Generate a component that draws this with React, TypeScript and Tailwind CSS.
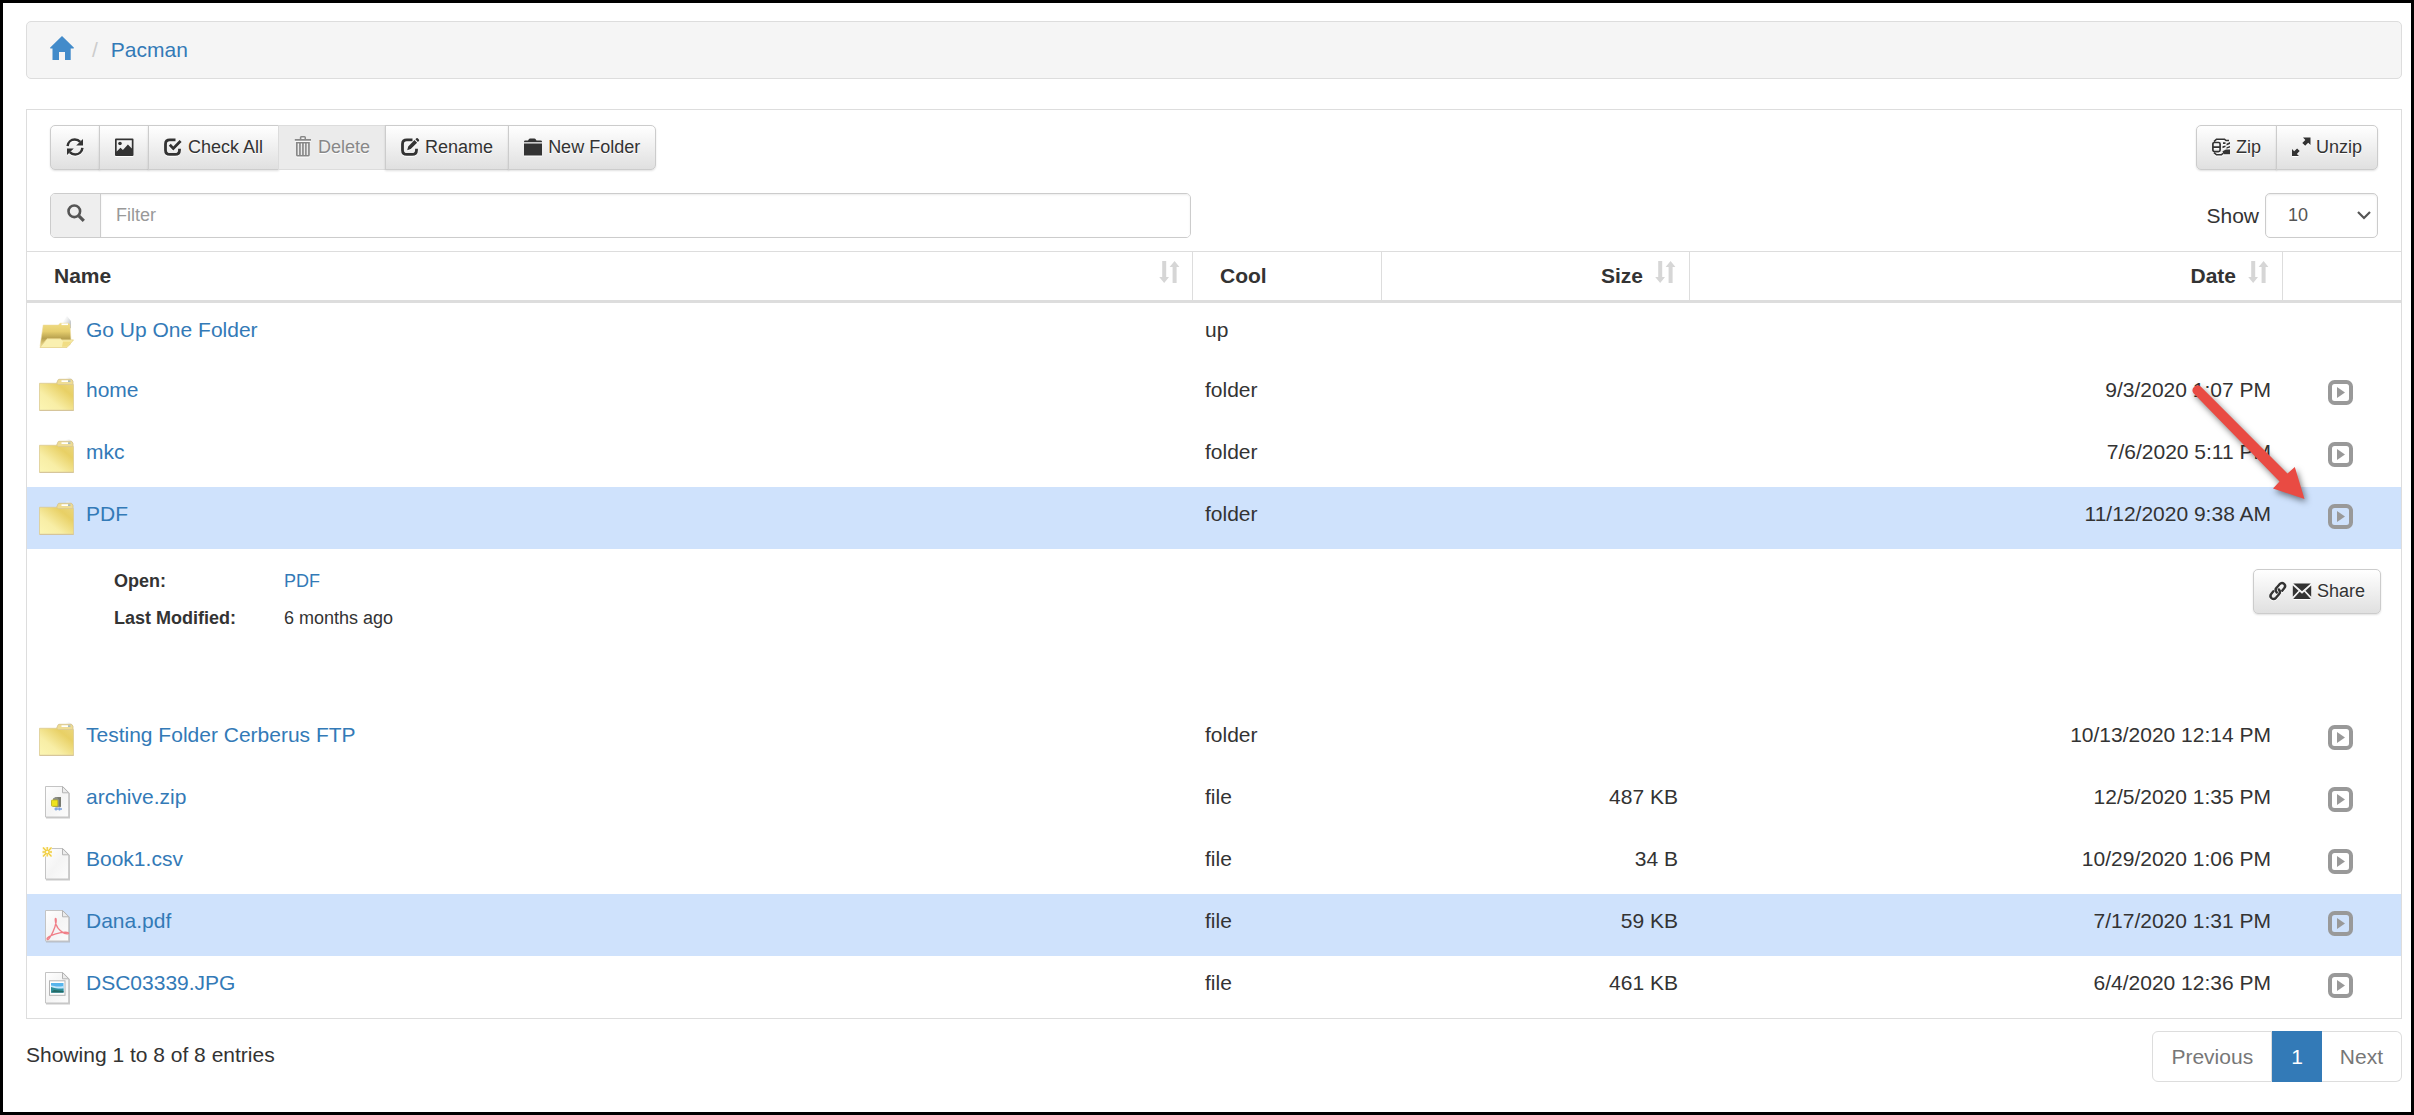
import { useState } from "react";
import type { ReactNode } from "react";

type EntryKind = "up" | "folder" | "zip" | "csv" | "pdf" | "image";

interface Entry {
  name: string;
  kind: EntryKind;
  cool: string;
  size?: string;
  date?: string;
  selected?: boolean;
  modified?: string;
}

const ENTRIES: Entry[] = [
  { name: "Go Up One Folder", kind: "up", cool: "up" },
  { name: "home", kind: "folder", cool: "folder", date: "9/3/2020 1:07 PM" },
  { name: "mkc", kind: "folder", cool: "folder", date: "7/6/2020 5:11 PM" },
  {
    name: "PDF",
    kind: "folder",
    cool: "folder",
    date: "11/12/2020 9:38 AM",
    selected: true,
    modified: "6 months ago",
  },
  { name: "Testing Folder Cerberus FTP", kind: "folder", cool: "folder", date: "10/13/2020 12:14 PM" },
  { name: "archive.zip", kind: "zip", cool: "file", size: "487 KB", date: "12/5/2020 1:35 PM" },
  { name: "Book1.csv", kind: "csv", cool: "file", size: "34 B", date: "10/29/2020 1:06 PM" },
  { name: "Dana.pdf", kind: "pdf", cool: "file", size: "59 KB", date: "7/17/2020 1:31 PM", selected: true },
  { name: "DSC03339.JPG", kind: "image", cool: "file", size: "461 KB", date: "6/4/2020 12:36 PM" },
];

/* ---------- glyphs ---------- */

function Glyph({ children }: { children: ReactNode }) {
  return (
    <svg
      viewBox="0 0 18 18"
      className="mb-0.5 h-[18px] w-[18px] shrink-0 overflow-visible drop-shadow-[0_1px_0_#fff]"
      fill="currentColor"
      aria-hidden="true"
    >
      {children}
    </svg>
  );
}

const RefreshGlyph = () => (
  <Glyph>
    <path d="M1.6 8.2C2 4 5 1.6 8.8 1.6c2.3 0 4 .8 5.4 2.3" fill="none" stroke="currentColor" strokeWidth="2.5" />
    <path d="M17 1v6.6h-6.8z" />
    <path d="M16.4 9.8c-.4 4.2-3.4 6.6-7.2 6.6-2.3 0-4-.8-5.4-2.3" fill="none" stroke="currentColor" strokeWidth="2.5" />
    <path d="M1 17v-6.6h6.8z" />
  </Glyph>
);

const PictureGlyph = () => (
  <Glyph>
    <path
      fillRule="evenodd"
      d="M1 .5h16.500q1 0 1 1v15.500q0 1-1 1H1q-1 0-1-1V1.500q0-1 1-1zM1.700 2.200V13.500L5.500 9.800l2.400 2.200 5-5.500 3.900 4V2.200z"
    />
    <circle cx="5" cy="5.500" r="1.800" />
  </Glyph>
);

const boxOutline = "M11.500 1.800H5.800C3 1.800 1.500 3.200 1.500 6v6.200c0 2.800 1.500 4.200 4.300 4.200h5.400c2.800 0 4.300-1.400 4.300-4.200v-1.400";

const CheckGlyph = () => (
  <Glyph>
    <path d={boxOutline} fill="none" stroke="currentColor" strokeWidth="2.800" />
    <path d="M4.800 7.800l2-2 2.500 2.600L15.600 2l2 2-8.300 8.600z" />
  </Glyph>
);

const EditGlyph = () => (
  <Glyph>
    <path d={boxOutline} fill="none" stroke="currentColor" strokeWidth="2.800" />
    <path d="M6.200 12.200l1-3.800 6.300-6.300 2.600 2.600-6.300 6.400zM14.400 1.300l1-1q.6-.6 1.300 0l1.200 1.200q.7.700 0 1.400l-1 1z" />
  </Glyph>
);

const TrashGlyph = () => (
  <Glyph>
    <path
      fillRule="evenodd"
      d="M.8 1h5V-.5q0-1.500 1.500-1.500h3.200Q12 -2 12 -.5V1h5v1.800H.8zM7.400-.6V1h3.100V-.6zM2 4h13.800v13q0 1.600-1.600 1.600H3.600Q2 18.600 2 17zM3.700 5.400v11.500h1.400V5.400zM6.800 5.400v11.500h1.300V5.400zM9.800 5.400v11.500h1.300V5.400zM12.700 5.400v11.500h1.400V5.400z"
    />
  </Glyph>
);

const FolderGlyph = () => (
  <Glyph>
    <path d="M0 3.800q0-1.300 1.300-1.300H4L5 1q.3-.5 1-.5h4.500q.7 0 1 .5l1 1.500h4.200Q18 2.500 18 3.800V4.200H0zM0 5.400h18v12.100H0z" />
  </Glyph>
);

const ZipGlyph = () => (
  <Glyph>
    <path
      d="M2 3.600L4.500 1.200h8l1.500 1.300h3M2 14.600l2.500 2.200h5l1.500-1.600"
      fill="none"
      stroke="currentColor"
      strokeWidth="1.600"
    />
    <rect x=".9" y="4.500" width="7.200" height="9.200" rx="1.600" fill="none" stroke="currentColor" strokeWidth="1.700" />
    <path d="M1 8.300h7v1.600H1zM11 4.200h2.500V6H11zM14.500 5.800L18 4v1.900l-3.500 1.700zM10.500 8.300l3-.8v1.600l-3 1.100zM14.500 9.300L18 8v1.600l-3.500 1.200zM10.500 13.200l3.500-1.700h4v4.800h-6.500z" />
  </Glyph>
);

const ResizeGlyph = () => (
  <Glyph>
    <path d="M18.500-.500v7.500l-2.300-2.200-3 3-2.900-2.900 3-3L11-.500zM0 18v-7l2.200 2.200 2.900-2.700 2.600 2.600-2.800 2.800L7 18z" />
  </Glyph>
);

const LinkGlyph = () => (
  <Glyph>
    <g fill="none" stroke="currentColor" strokeWidth="2.400" strokeLinecap="round">
      <path d="M7.800 10.600C6.300 8.900 6.300 7 7.600 5.700l3-3.500c1.500-1.500 3.200-1.400 4.500-.3 1.300 1.200 1.300 3 .1 4.400l-2 2.400" />
      <path d="M9.800 7.400c1.500 1.700 1.500 3.400.2 4.800L7 15.800c-1.500 1.500-3.200 1.400-4.500.3-1.300-1.200-1.300-3-.1-4.400l2-2.400" />
    </g>
  </Glyph>
);

const MailGlyph = () => (
  <Glyph>
    <path d="M.3 1.500h17.500L9 9.300zM-.2 3.600l5.700 5.100-5.700 6.100zM18.200 3.600v11.200l-5.700-6.100zM.2 17l6.500-7.200L9 11.800l2.300-2L17.800 17z" />
  </Glyph>
);

const SortGlyph = () => (
  <svg viewBox="0 0 21 22" className="h-[22px] w-[21px] shrink-0" fill="#d6d6d6" aria-hidden="true">
    <path d="M3.200 0h4v16H10l-4.800 6L.2 16h3zM13.600 22V6h-3l5-6 4.800 6h-2.800v16z" />
  </svg>
);

/* ---------- file type pictures ---------- */

function Sheet({ children }: { children?: ReactNode }) {
  return (
    <>
      <path d="M7 35.800h23.300V11" fill="none" stroke="#a8a8a8" strokeOpacity=".6" strokeWidth="1.400" />
      <path d="M6.500 4.500h17.200l6 6v24.500H6.500z" fill="url(#sheet)" stroke="#c4c4c4" />
      <path d="M23.500 4.500l6.200 6.300h-6.200z" fill="#ececec" stroke="#b4b4b4" />
      {children}
    </>
  );
}

function FolderPicture() {
  return (
    <>
      <path d="M27 1.500l3 .5 4 3.500v4h-7z" fill="url(#paper)" />
      <path d="M17.500 8.500l1.500-3.500q.3-.7 1-.7h12.500l1.500 2v3.200H17.500z" fill="#eedc94" stroke="#d3c08a" strokeWidth=".8" />
      <rect x="22.500" y="5.300" width="6.500" height="1.700" fill="#fff" />
      <rect x="29" y="5.300" width="2.500" height="1.700" fill="#a9bcc0" />
      <path d="M.5 8.300h17.500l1.200 1.200h15.300v26H.5z" fill="url(#folder)" stroke="#dccb94" strokeWidth=".8" />
      <path d="M.8 35.300h33.700" stroke="#d3c19a" />
    </>
  );
}

function OpenFolderPicture() {
  return (
    <>
      <path d="M24 7c2-3 3-5 4-6l4 5v7l-4 2z" fill="url(#paper)" />
      <path d="M1 31.500L4.200 10h15.300l1.500-1.800h8.500l1.500 1.500 1 16L31 30z" fill="url(#folderback)" stroke="#ecdb9c" strokeWidth=".5" />
      <rect x="22.500" y="8.500" width="6.500" height="1.600" fill="#fff" />
      <path d="M1 32.500l7-8.800h13.500l1.500 1.200h11.500l-6.500 7.600z" fill="#faf0b0" stroke="#e5d088" strokeWidth=".8" />
      <path d="M24 26.500h8.500l-4.500 5.200h-5z" fill="#f1dd84" />
    </>
  );
}

function EntryPicture({ kind }: { kind: EntryKind }) {
  return (
    <svg viewBox="0 0 36 36" className="h-9 w-9 shrink-0 overflow-visible" aria-hidden="true">
      {kind === "up" && <OpenFolderPicture />}
      {kind === "folder" && <FolderPicture />}
      {kind === "zip" && (
        <Sheet>
          <path d="M14 16.500l2.500-1.500h5.500v10l-4 .5-4-1z" fill="#8d8f86" />
          <path d="M18 15.300h4v9h-2v-6.500z" fill="#77796f" />
          <rect x="12.500" y="18" width="6.300" height="6.300" rx=".8" fill="#eee21e" stroke="#b9ae20" strokeWidth=".8" />
          <path d="M15.500 27h7.500M17 25.500v3M20.500 25.500v3" stroke="#7da3e0" strokeWidth="1.400" />
        </Sheet>
      )}
      {kind === "csv" && (
        <>
          <Sheet />
          <rect x="3.500" y="3" width="9.500" height="9.500" fill="#fdf8e0" />
          <path d="M4 3.500l8.500 9M12.500 3.500L4 12.500M8.200 3v9.500M3.500 8h9.500" stroke="#f0cc3c" strokeWidth="1.300" />
          <circle cx="8.200" cy="8" r="1.200" fill="#fffbe8" />
        </>
      )}
      {kind === "pdf" && (
        <Sheet>
          <path
            d="M16.600 12.500c.8 0 .6 2.500.4 4-.8 5-4.500 13.500-7.300 16.500-1 1-2.200.5-1.400-.8 2.500-3.400 13.500-6.400 20-5.800 1.600.2 1.700 1.600-.2 1.500-4.600-.2-9.400-4.800-11-9.500-.6-2-1.200-5.900-.5-5.900z"
            fill="none"
            stroke="#f07f88"
            strokeWidth="1.400"
          />
        </Sheet>
      )}
      {kind === "image" && (
        <Sheet>
          <rect x="10.500" y="12.800" width="15.500" height="14.500" fill="#fff" stroke="#b3b3b3" />
          <rect x="12" y="15" width="12.500" height="9.500" fill="#56b4ec" />
          <path d="M12 17.500c3 0 5 2 12.500.5v2.500H12z" fill="#c5e7f9" />
          <path d="M12 19c3 .3 5 2.500 12.500 1.500v4H12z" fill="#2f8f9b" />
          <path d="M12 24.500h12.500V23L15 22z" fill="#256a64" />
        </Sheet>
      )}
    </svg>
  );
}

/** Gradients shared by every file type picture. */
function PictureDefs() {
  return (
    <svg width="0" height="0" className="absolute" aria-hidden="true">
      <defs>
        <linearGradient id="folder" x1="0" y1="1" x2="1" y2="0">
          <stop offset="0" stopColor="#fcf6b4" />
          <stop offset=".35" stopColor="#f8eea6" />
          <stop offset=".75" stopColor="#e8d065" />
          <stop offset="1" stopColor="#ebd67c" />
        </linearGradient>
        <linearGradient id="folderback" x1="0" y1="0" x2="0" y2="1">
          <stop offset="0" stopColor="#f0dc84" />
          <stop offset=".35" stopColor="#e6ce6e" />
          <stop offset=".65" stopColor="#b7a04e" />
          <stop offset="1" stopColor="#f0df92" />
        </linearGradient>
        <linearGradient id="paper" x1="0" y1="0" x2="1" y2="1">
          <stop offset="0" stopColor="#fff" stopOpacity="0" />
          <stop offset=".6" stopColor="#d3d6d8" />
          <stop offset="1" stopColor="#a8adb0" />
        </linearGradient>
        <linearGradient id="sheet" x1="0" y1="0" x2="1" y2="1">
          <stop offset="0" stopColor="#fff" />
          <stop offset=".5" stopColor="#f4f4f4" />
          <stop offset="1" stopColor="#fcfcfc" />
        </linearGradient>
      </defs>
    </svg>
  );
}

/* ---------- controls ---------- */

const BUTTON =
  "flex h-[45px] items-center gap-1.5 border px-[15px] text-lg leading-[27px] whitespace-nowrap [text-shadow:0_1px_0_#fff]";
const BUTTON_ON =
  "border-[#ccc] bg-linear-to-b from-white to-[#e0e0e0] shadow-[inset_0_1px_0_rgba(255,255,255,0.15),0_1px_2px_rgba(0,0,0,0.12)]";
const BUTTON_OFF = "border-[#dcdcdc] bg-[#ebebeb] text-[#888]";
const GROUPED = "-ml-px first:ml-0 first:rounded-l-[5px] last:rounded-r-[5px]";

interface ToolButtonProps {
  icon: ReactNode;
  label: string;
  iconOnly?: boolean;
  disabled?: boolean;
}

function ToolButton({ icon, label, iconOnly, disabled }: ToolButtonProps) {
  return (
    <button
      type="button"
      disabled={disabled}
      aria-label={iconOnly ? label : undefined}
      className={`${BUTTON} ${GROUPED} ${disabled ? BUTTON_OFF : BUTTON_ON}`}
    >
      {icon}
      {!iconOnly && label}
    </button>
  );
}

function Toolbar() {
  return (
    <div className="flex flex-wrap justify-between gap-y-3">
      <div className="flex">
        <ToolButton icon={<RefreshGlyph />} label="Refresh" iconOnly />
        <ToolButton icon={<PictureGlyph />} label="Thumbnails" iconOnly />
        <ToolButton icon={<CheckGlyph />} label="Check All" />
        <ToolButton icon={<TrashGlyph />} label="Delete" disabled />
        <ToolButton icon={<EditGlyph />} label="Rename" />
        <ToolButton icon={<FolderGlyph />} label="New Folder" />
      </div>
      <div className="flex">
        <ToolButton icon={<ZipGlyph />} label="Zip" />
        <ToolButton icon={<ResizeGlyph />} label="Unzip" />
      </div>
    </div>
  );
}

function FilterBar() {
  const [filter, setFilter] = useState("");
  return (
    <div className="mt-[23px] flex items-center justify-between gap-6">
      <div className="flex h-[45px] w-[49%] rounded-[5px] border border-[#ccc]">
        <label
          htmlFor="filter"
          aria-label="Filter"
          className="flex w-[50px] shrink-0 items-center justify-center rounded-l-[4px] border-r border-[#ccc] bg-[#eee] text-[#555]"
        >
          <svg viewBox="0 0 18 18" className="mb-1.5 h-[18px] w-[18px]" fill="none" stroke="currentColor" aria-hidden="true">
            <circle cx="7.300" cy="7.300" r="5.800" strokeWidth="2.600" />
            <path d="M11.800 11.800l5 5" strokeWidth="3.200" />
          </svg>
        </label>
        <input
          id="filter"
          type="text"
          placeholder="Filter"
          value={filter}
          onChange={(e) => setFilter(e.target.value)}
          className="min-w-0 flex-1 rounded-r-[4px] bg-white px-[15px] pb-px text-lg text-[#555] shadow-[inset_0_1px_2px_rgba(0,0,0,0.075)] outline-none placeholder:text-[#999]"
        />
      </div>
      <div className="flex items-center gap-1.5">
        <label htmlFor="page-size">Show</label>
        <div className="relative">
          <select
            id="page-size"
            defaultValue="10"
            className="h-[45px] w-[113px] appearance-none rounded-[5px] border border-[#ccc] bg-white pb-px pl-[22px] text-lg text-[#555] shadow-[inset_0_1px_2px_rgba(0,0,0,0.075)]"
          >
            <option>10</option>
            <option>25</option>
            <option>50</option>
            <option>100</option>
          </select>
          <svg
            viewBox="0 0 14 9"
            className="pointer-events-none absolute top-[18px] right-[7px] h-[9px] w-[14px]"
            fill="none"
            stroke="#555"
            strokeWidth="2.200"
            aria-hidden="true"
          >
            <path d="M1 1l6 6 6-6" />
          </svg>
        </div>
      </div>
    </div>
  );
}

/* ---------- table ---------- */

const TH = "border-t border-r border-b-[3px] border-[#ddd] py-[9px] font-bold last:border-r-0";
const TD = "px-3 py-3 align-top";

function Pointer() {
  return (
    <svg
      viewBox="0 0 120 124"
      className="pointer-events-none absolute right-[91px] bottom-[42px] z-10 h-[124px] w-[120px] overflow-visible drop-shadow-[2px_3px_3px_rgba(0,0,0,0.5)]"
      fill="#e94b43"
      aria-hidden="true"
    >
      <path d="M3.500 10.300a5 5 0 0 1 7.200-6.800L97.500 90.500l7.300-6.500L114.500 116 83 105.500l6.500-7z" />
    </svg>
  );
}

function DetailRow({ entry }: { entry: Entry }) {
  return (
    <tr>
      <td colSpan={5} className="p-0 text-lg">
        <div className="flex items-start justify-between pt-3.5 pr-5 pb-[71px] pl-[87px]">
          <dl className="grid grid-cols-[170px_auto] leading-[37px]">
            <dt className="font-bold">Open:</dt>
            <dd>
              <a href="#open" className="text-[#337ab7]">
                {entry.name}
              </a>
            </dd>
            <dt className="font-bold">Last Modified:</dt>
            <dd>{entry.modified}</dd>
          </dl>
          <button type="button" className={`${BUTTON} ${BUTTON_ON} mt-1.5 rounded-[5px]`}>
            <LinkGlyph />
            <MailGlyph />
            Share
          </button>
        </div>
      </td>
    </tr>
  );
}

function EntryRow({ entry }: { entry: Entry }) {
  return (
    <>
      <tr className={`${entry.kind === "up" ? "h-[60px]" : "h-[62px]"} ${entry.selected ? "bg-[#cfe2fc]" : ""}`}>
        <td className={TD}>
          <a href="#entry" className="flex items-start gap-[11px] text-[#337ab7]">
            <EntryPicture kind={entry.kind} />
            {entry.name}
          </a>
        </td>
        <td className={TD}>{entry.cool}</td>
        <td className={`${TD} text-right`}>{entry.size}</td>
        <td className={`${TD} text-right`}>{entry.date}</td>
        <td className="relative pt-[17px] pr-1 text-center align-top">
          {entry.kind !== "up" && (
            <button type="button" aria-label={`Details for ${entry.name}`} className="mx-auto block">
              <svg viewBox="0 0 25 25" className="h-[25px] w-[25px]" aria-hidden="true">
                <rect x="2" y="2" width="21" height="21" rx="4.500" fill="none" stroke="#999" strokeWidth="4" />
                <path d="M9 7l8 5.500-8 5.500z" fill="#999" />
              </svg>
            </button>
          )}
          {entry.modified && <Pointer />}
        </td>
      </tr>
      {entry.modified && <DetailRow entry={entry} />}
    </>
  );
}

function FileTable() {
  return (
    <table className="w-full table-fixed border-separate border-spacing-0">
      <colgroup>
        <col />
        <col className="w-[189px]" />
        <col className="w-[308px]" />
        <col className="w-[593px]" />
        <col className="w-[118px]" />
      </colgroup>
      <thead>
        <tr>
          <th className={`${TH} pr-3 pl-[27px] text-left`}>
            <span className="flex items-start justify-between">
              Name
              <SortGlyph />
            </span>
          </th>
          <th className={`${TH} pl-[27px] text-left`}>Cool</th>
          <th className={`${TH} pr-[13px]`}>
            <span className="flex items-start justify-end gap-3">
              Size
              <SortGlyph />
            </span>
          </th>
          <th className={`${TH} pr-[13px]`}>
            <span className="flex items-start justify-end gap-3">
              Date
              <SortGlyph />
            </span>
          </th>
          <th className={TH} aria-label="Details" />
        </tr>
      </thead>
      <tbody>
        {ENTRIES.map((entry) => (
          <EntryRow key={entry.name} entry={entry} />
        ))}
      </tbody>
    </table>
  );
}

const PAGE = "flex h-[51px] items-center border px-[18px]";

function Pagination() {
  return (
    <nav className="flex" aria-label="Pages">
      <button type="button" disabled className={`${PAGE} rounded-l-md border-[#ddd] text-[#777]`}>
        Previous
      </button>
      <button type="button" aria-current="page" className={`${PAGE} border-[#337ab7] bg-[#337ab7] text-white`}>
        1
      </button>
      <button type="button" disabled className={`${PAGE} rounded-r-md border-l-0 border-[#ddd] text-[#777]`}>
        Next
      </button>
    </nav>
  );
}

export default function App() {
  return (
    <div className="min-h-screen border-3 border-black bg-white pt-[18px] pr-[9px] pb-7 pl-[23px] font-['Liberation_Sans',Arial,sans-serif] text-[21px] leading-[30px] text-[#333]">
      <PictureDefs />

      <nav aria-label="Breadcrumb" className="rounded-[5px] border border-[#ddd] bg-[#f5f5f5] px-[23px] py-[13px]">
        <ol className="flex h-[30px] items-center">
          <li>
            <a href="#home" aria-label="Home">
              <svg viewBox="0 0 24 24" className="mb-1 h-6 w-6" fill="#428bca" aria-hidden="true">
                <path d="M12 0l12 11.700-.4.800h-2.900V24H15v-8H9v8H2.500V12.500H.4L0 11.700z" />
              </svg>
            </a>
          </li>
          <li className="pr-[13px] pl-[18px] text-[#ccc]" aria-hidden="true">
            /
          </li>
          <li>
            <a href="#pacman" className="text-[#337ab7]">
              Pacman
            </a>
          </li>
        </ol>
      </nav>

      <main className="mt-[30px] border border-[#ddd]">
        <div className="px-[23px] pt-[15px] pb-[13px]">
          <Toolbar />
          <FilterBar />
        </div>
        <FileTable />
      </main>

      <footer className="mt-3 flex items-start justify-between">
        <p className="mt-[9px]">Showing 1 to 8 of 8 entries</p>
        <Pagination />
      </footer>
    </div>
  );
}
